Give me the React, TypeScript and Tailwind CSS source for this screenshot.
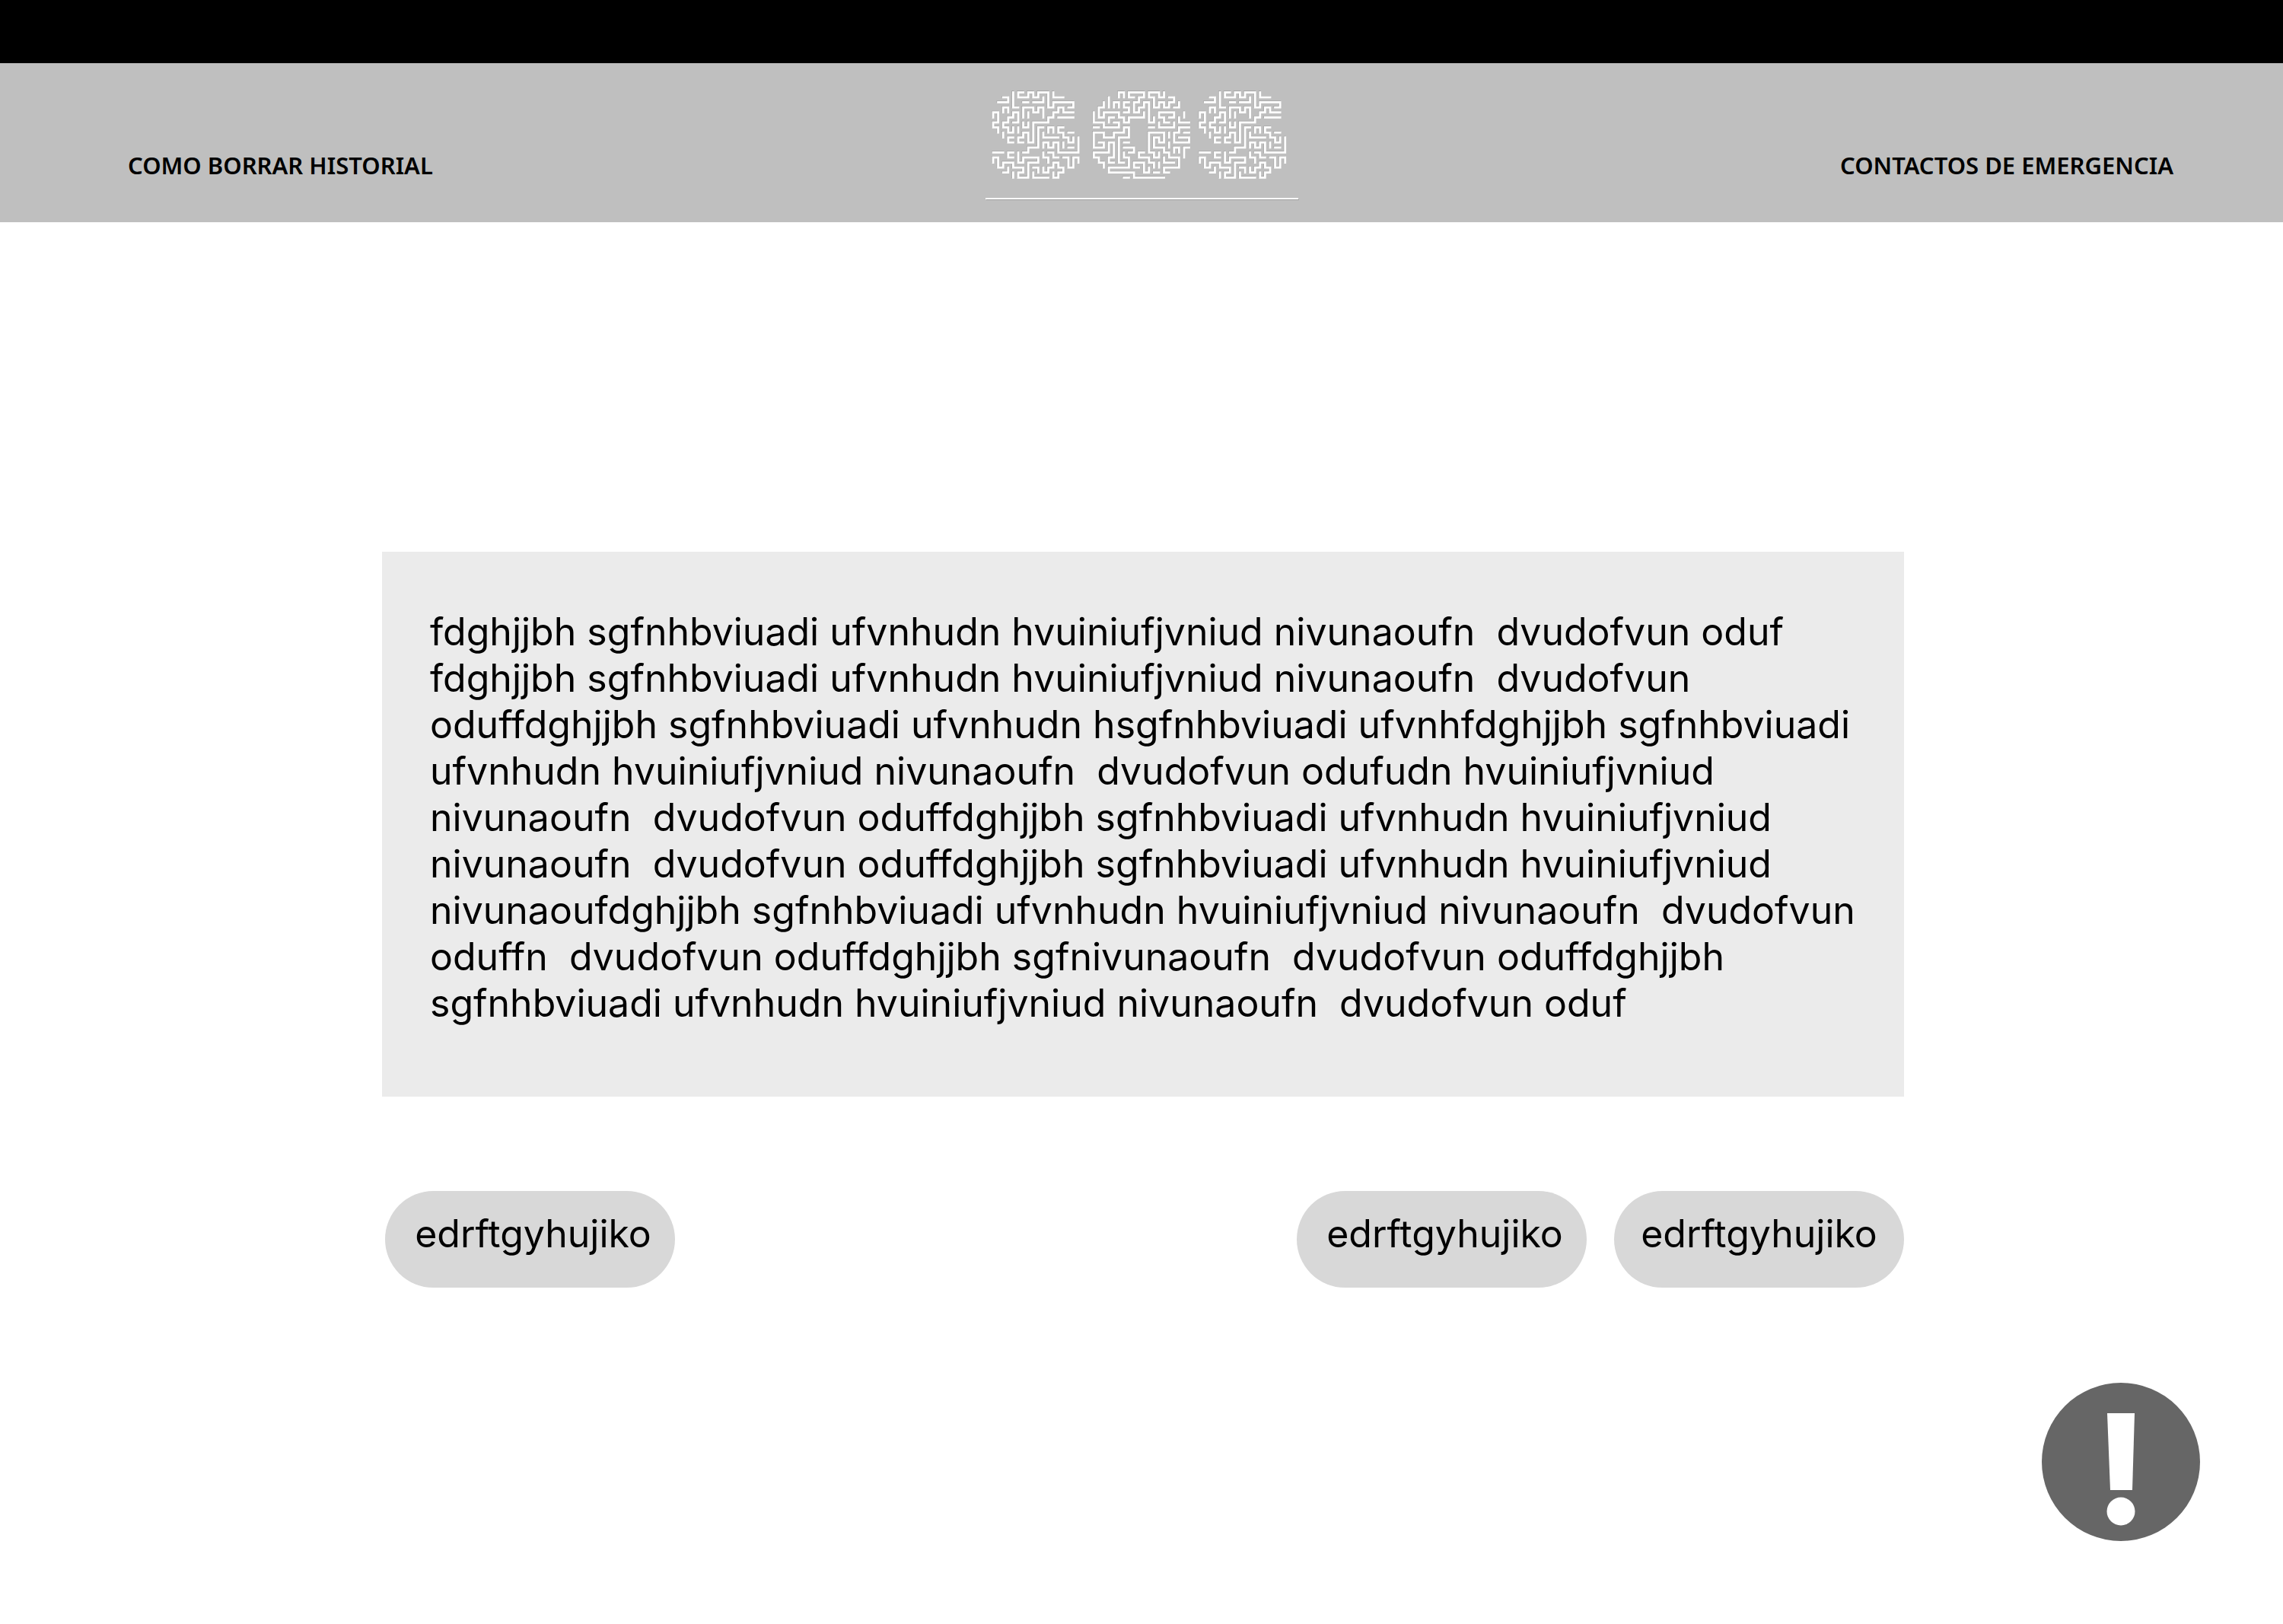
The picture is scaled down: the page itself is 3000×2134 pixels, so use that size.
const S_LINES =
  'M2 1H3V2H1 M4 0V3H5 M6 0H5V1H7V0H8V1H9V0H11V3H12V2H16V3H15 M12 0V1H14 M6 2H7 M8 2H10V1 M0 5V4H1V6H0V7H1V8 M2 4V3H3V4 M6 5V3H8V4H9V3H10V5 M7 4V5 M4 6H5V4H4V5H3V6H2V7H3V8H4V7 M5 7V8 M6 6V7H7V6 M16 4H14V3H13V4H12V5H11V6H8V10H7V8H6V9H5V10H6 M13 5H16 M2 8V9 M4 9H3V10H4 M10 7H9V11H7V12H6 M11 8V7H12V8 M10 8V9H13 M14 7H13V8H14V9H15V10H16V9 M15 8H16 M10 11V10H11V11H12V10H13V12H17V9 M14 10V11 M15 11H16 M0 12H2 M4 12H3V13H4 M5 12V14H6V13H9V14H7V17H5V16H6V15H4V14H2V15H1V13H0V14 M2 16H3V15 M4 16V17 M8 15H9V16 M8 16V17H11 M10 12V13H11V14 M11 12H12V13H13 M14 13H15V15H16V13H17V14 M10 15V16H11V15H12V14H13V15H14V16H13V17H12V16';

const O_LINES =
  'M5 1V0H6V1 M8 1H7V0H10V1H9V2H8V4H9V3H10V2H11V6H12V5 M14 0V1H13V0H11V1H12V3H13V2H14V3H15V2H16V1H15 M3 1V3 M4 3V2H5V3 M7 2H6V3H7V4H6 M16 3H17V2 M2 2V3H1V5H2V4H5V5H6V6H7V5H10V4 M0 4V6H2V7H5V6H4 M3 6V5H4 M0 7H1 M15 6H14V5H13V4H16V5H15 M18 4V5 M17 5V6H19 M11 7H12 M13 6V7H16V6 M19 7H17V8H16V10H19V9H17 M18 8H19 M6 7H7V9H5V14H6 M6 7V8H4V9H2V8H0V11H2V10H1 M6 10H7 M6 11H8V12H7 M13 9V10H14V8H11V12H12V13H13V12 M13 9H12V11H14V12H15V13H17V15H14V16H15 M15 8V9 M15 10V11 M16 12V11H17V12 M19 11H18V13 M4 14H3V13H4V10H3V12H0V13H1V14H2V15 M6 12V13H7V15H3V16H8V17H14 M6 17H7 M10 12H9V13H11V14H12V15 M9 15H8V14H10V16H11V15 M13 14V15 M12 16H13 M14 13V14H16';

const LETTERS = [
  { id: 'first-s', lines: S_LINES, x: 10 },
  { id: 'o', lines: O_LINES, x: 142.3 },
  { id: 'last-s', lines: S_LINES, x: 281.7 },
];

function Logo() {
  return (
    <svg viewBox="0 0 412 148" className="h-[148px] w-[412px]" role="img" aria-label="SOS" fill="none">
      {LETTERS.map(({ id, lines, x }) => (
        <g key={id} strokeLinecap="square" strokeWidth="0.42">
          <path d={lines} stroke="#a0a0a0" transform={`translate(${x - 0.6} 5.700) scale(6.59)`} />
          <path d={lines} stroke="#fff" transform={`translate(${x} 6.300) scale(6.59)`} />
        </g>
      ))}
      <path d="M1 147.5H412" stroke="#a0a0a0" />
      <path d="M0 146H411" stroke="#fff" strokeWidth="2" />
    </svg>
  );
}

function PillButton({ className = 'pl-2' }: { className?: string }) {
  return (
    <button
      type="button"
      className={`flex h-[127px] w-[381px] items-center justify-center rounded-full bg-[#d8d8d8] pb-3.5 text-[50px] leading-[61px] ${className}`}
    >
      edrftgyhujiko
    </button>
  );
}

const MESSAGE =
  'fdghjjbh sgfnhbviuadi ufvnhudn hvuiniufjvniud nivunaoufn  dvudofvun oduf fdghjjbh sgfnhbviuadi ufvnhudn hvuiniufjvniud nivunaoufn  dvudofvun oduffdghjjbh sgfnhbviuadi ufvnhudn hsgfnhbviuadi ufvnhfdghjjbh sgfnhbviuadi ufvnhudn hvuiniufjvniud nivunaoufn  dvudofvun odufudn hvuiniufjvniud nivunaoufn  dvudofvun oduffdghjjbh sgfnhbviuadi ufvnhudn hvuiniufjvniud nivunaoufn  dvudofvun oduffdghjjbh sgfnhbviuadi ufvnhudn hvuiniufjvniud nivunaoufdghjjbh sgfnhbviuadi ufvnhudn hvuiniufjvniud nivunaoufn  dvudofvun oduffn  dvudofvun oduffdghjjbh sgfnivunaoufn  dvudofvun oduffdghjjbh sgfnhbviuadi ufvnhudn hvuiniufjvniud nivunaoufn  dvudofvun oduf';

export default function App() {
  return (
    <div className="min-h-screen bg-white font-['Inter',sans-serif] text-black">
      <div className="h-[83px] bg-black" />
      <header className="grid h-[209px] grid-cols-[1fr_auto_1fr] items-start bg-[#bfbfbf] pr-[144px] pl-[168px] font-['Noto_Sans',sans-serif] text-[31px] leading-[44px] font-semibold">
        <a href="#historial" className="mt-28 justify-self-start">
          COMO BORRAR HISTORIAL
        </a>
        <a href="#inicio" className="mt-8 -ml-[22px]">
          <Logo />
        </a>
        <a href="#contactos" className="mt-28 justify-self-end">
          CONTACTOS DE EMERGENCIA
        </a>
      </header>
      <main className="pt-[433px] pl-1">
        <div className="mx-auto max-w-[2000px]">
          <p className="bg-[#ebebeb] px-[63px] pt-[75px] pb-[92px] text-[50px] leading-[61px] whitespace-pre-wrap">
            {MESSAGE}
          </p>
          <div className="mt-[124px] flex gap-9 pl-1">
            <PillButton />
            <div className="grow" />
            <PillButton />
            <PillButton className="pl-0" />
          </div>
        </div>
      </main>
      <div className="mt-[125px] flex justify-end pr-[109px]">
        <button type="button" aria-label="Emergencia">
          <svg viewBox="0 0 208 208" className="size-[208px]">
            <circle cx="104" cy="104" r="104" fill="#666" />
            <path d="M86 40H122L119 141H90Z" fill="#fff" />
            <circle cx="104" cy="169" r="18.500" fill="#fff" />
          </svg>
        </button>
      </div>
    </div>
  );
}
